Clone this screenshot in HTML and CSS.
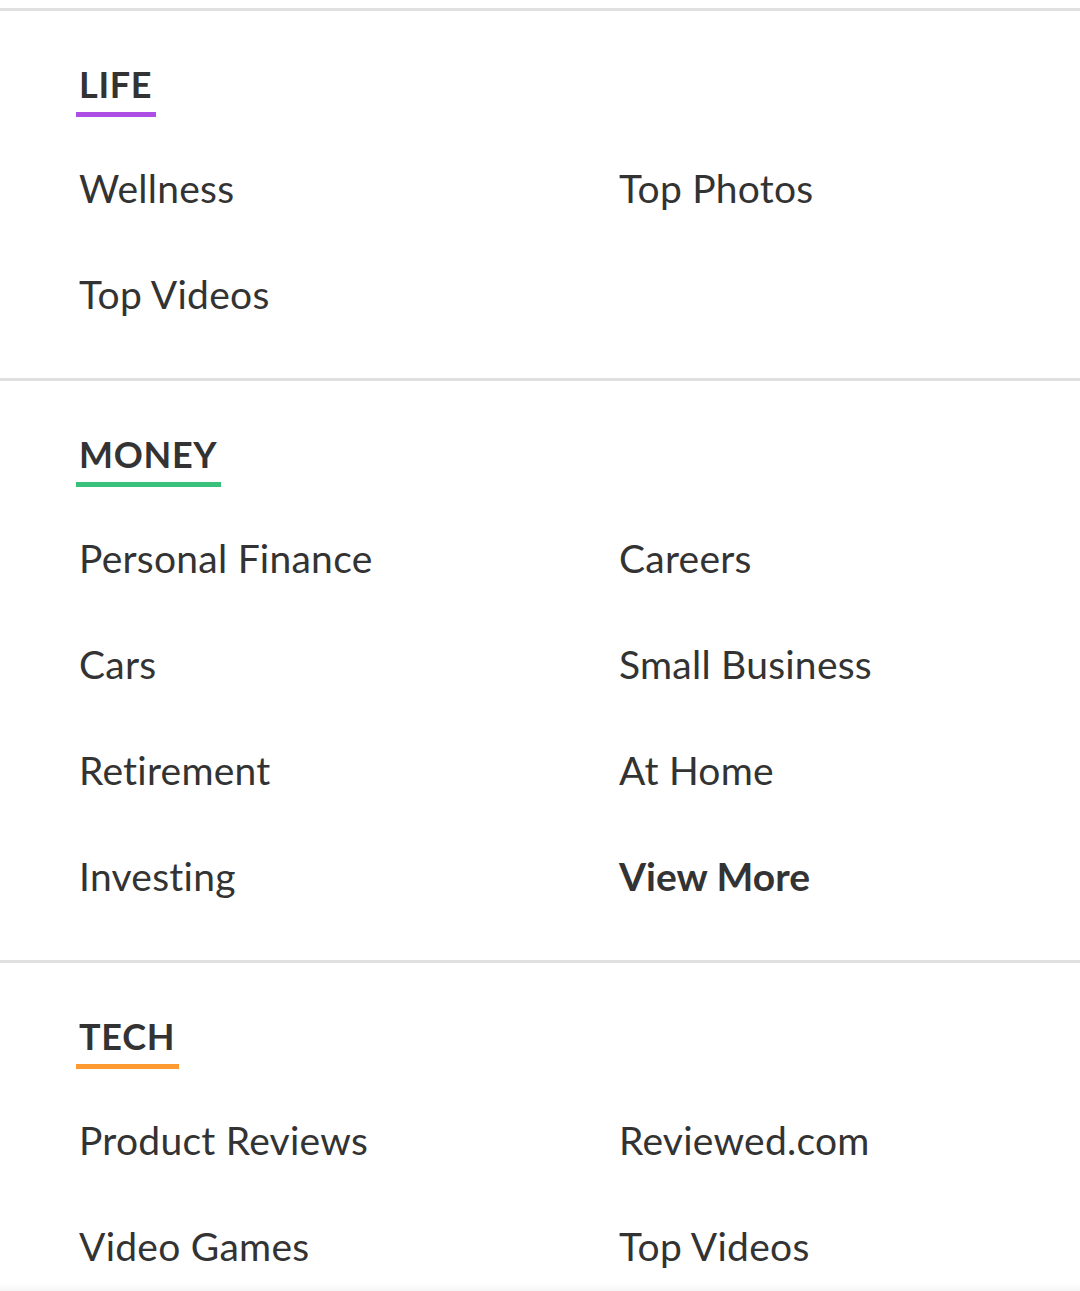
FILE: index.html
```html
<!DOCTYPE html>
<html>
<head>
<meta charset="utf-8">
<link rel="stylesheet" href="styles.css">
</head>
<body>
<div class="menu">
  <section class="section">
    <h2 class="heading life">LIFE</h2>
    <div class="links">
      <a class="link">Wellness</a>
      <a class="link">Top Photos</a>
      <a class="link">Top Videos</a>
    </div>
  </section>
  <section class="section">
    <h2 class="heading money">MONEY</h2>
    <div class="links">
      <a class="link">Personal Finance</a>
      <a class="link">Careers</a>
      <a class="link">Cars</a>
      <a class="link">Small Business</a>
      <a class="link">Retirement</a>
      <a class="link">At Home</a>
      <a class="link">Investing</a>
      <a class="link more">View More</a>
    </div>
  </section>
  <section class="section">
    <h2 class="heading tech">TECH</h2>
    <div class="links">
      <a class="link">Product Reviews</a>
      <a class="link">Reviewed.com</a>
      <a class="link">Video Games</a>
      <a class="link">Top Videos</a>
    </div>
  </section>
</div>
<div class="bottom-shade"></div>
</body>
</html>
```
FILE: styles.css
```css
html, body {
  margin: 0;
  padding: 0;
  background: #ffffff;
}
body {
  font-family: "Lato", "Liberation Sans", sans-serif;
  color: #333333;
  overflow: hidden;
}
.menu {
  padding-top: 8px;
}
.section {
  border-top: 3px solid #e0e0e0;
  padding: 55px 0 31px 0;
}
.heading {
  display: inline-block;
  margin: 0 0 0 76px;
  padding: 0 4px 10px 3px;
  font-size: 36px;
  line-height: 36px;
  font-weight: 700;
  letter-spacing: 0.7px;
  color: #333333;
  border-bottom: 5px solid #ccc;
}
.life { border-bottom-color: #ad4fe4; }
.money { border-bottom-color: #39c07b; }
.tech { border-bottom-color: #ff9a30; }
.links {
  display: grid;
  grid-template-columns: 1fr 1fr;
  margin-top: 18px;
}
.link {
  display: block;
  padding-left: 79px;
  font-size: 39px;
  line-height: 106px;
  height: 106px;
  letter-spacing: 0.25px;
  color: #333333;
  white-space: nowrap;
}
.more {
  font-weight: 700;
  letter-spacing: 0;
}
.bottom-shade {
  position: fixed;
  left: 0;
  right: 0;
  bottom: 0;
  height: 7px;
  background: linear-gradient(to bottom, rgba(0,0,0,0), rgba(0,0,0,0.04));
  pointer-events: none;
}
```
